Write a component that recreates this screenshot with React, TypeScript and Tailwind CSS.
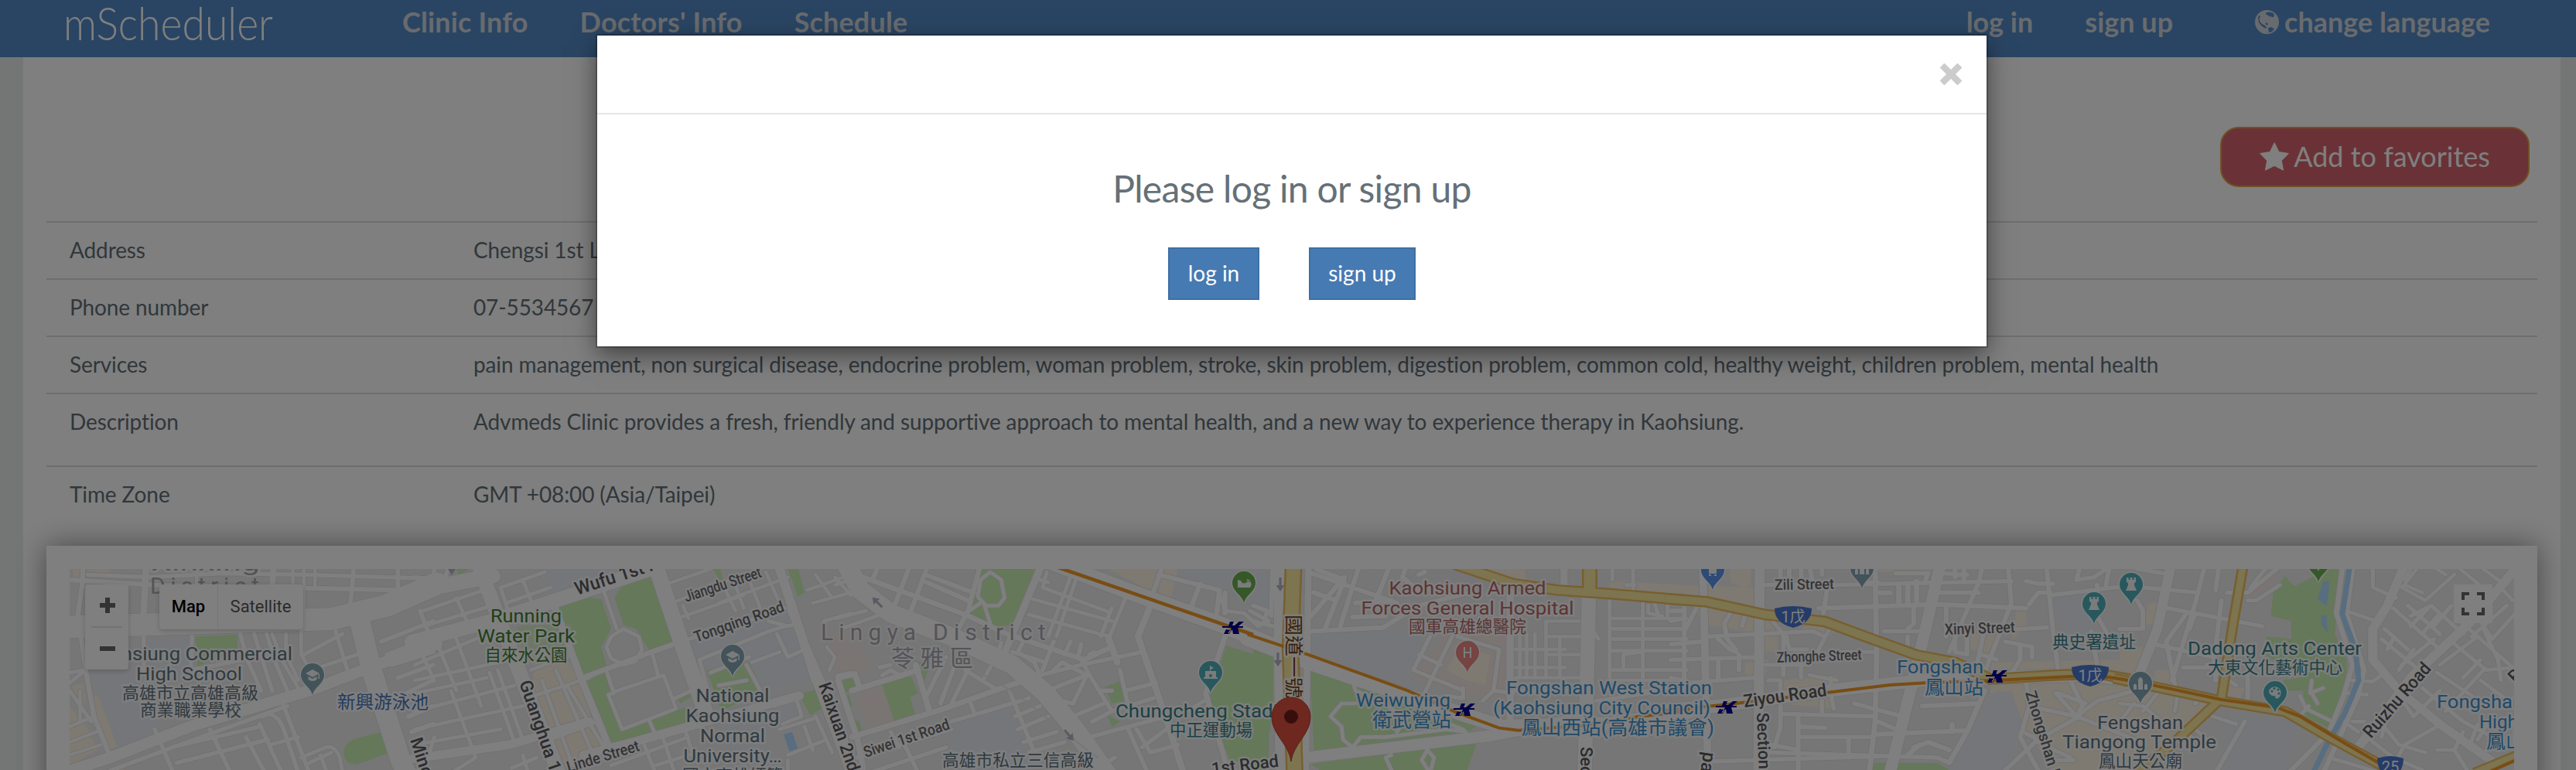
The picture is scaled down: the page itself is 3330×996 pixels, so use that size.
import React from "react";

type Road = [string, number];
type Area = [string, string];
interface Sector {
  t: string;
  areas: Area[];
  roads: Road[];
  trunks?: Road[];
  rail?: string[];
}

const GREEN = "#caf0b5";
const CAMPUS = "#e8edf5";
const TAN = "#fcf3e2";
const PINK = "#f4e8e5";
const WATER = "#b0dbff";

const sectors: Sector[] = [
  {
    t: "translate(0 680) scale(0.35714 0.33333)",
    areas: [
      ["M262,168H300L290,210 265,205Z", TAN],
      ["M318,168H398V186L318,182Z", TAN],
      ["M532,436L687,430 688,560 600,600 570,800 424,857 320,570 532,560Z", CAMPUS],
      ["M707,430L860,424V480L715,545Z", GREEN],
      ["M260,620L300,615 310,660 300,720Z", TAN],
      ["M330,655L358,662 424,855 385,876 325,720Z", TAN],
      ["M252,700L320,790 352,870 252,930Z", TAN],
      ["M1245,870Q1250,840 1290,825L1370,803Q1412,805 1418,850L1428,875 1290,926Q1240,925 1245,870Z", GREEN],
      ["M400,940L440,922 452,948H400Z", TAN],
    ],
    roads: [
      ["M240,393L1200,362 1400,310 1580,225", 86],
      ["M240,955L385,905 700,775 1120,640 1350,545 1580,460", 44],
      ["M1300,360L1345,560 1450,910 1470,960", 74],
      ["M252,210L560,230 1250,245 1440,250", 18],
      ["M300,168L298,230 282,340 310,560 340,740 400,900", 18],
      ["M318,190L540,200 800,185 1100,190 1568,205", 16],
      ["M528,168L520,340", 24], ["M712,168V240", 12], ["M990,168L985,240", 22],
      ["M1060,168V250M1100,168V330M1140,168V240", 12],
      ["M1280,168L1268,310M1440,168V250", 16],
      ["M1440,250L1568,200", 16],
      ["M310,560L252,610M310,560L252,570M252,640L330,760M252,780L340,740", 14],
      ["M252,840L350,800M252,890L365,850M290,640V760", 12],
      ["M520,430V560M695,430L690,560 880,520", 16],
      ["M870,420L895,520 945,640M920,420L985,640M965,420L1000,540 1040,640", 15],
      ["M985,420L1020,520 1080,630M1035,420V500L1080,600M1090,410V500L1150,610", 14],
      ["M1100,500L1240,420M1100,570L1320,490M1215,410L1260,570", 15],
      ["M1380,450L1568,370M1400,500L1568,430M1520,330L1568,460M1420,540L1568,490M1440,590L1568,540M1450,660L1568,600", 16],
      ["M1480,740L1568,700M1490,800L1568,770", 18],
      ["M560,790L640,990M600,800L950,690M620,860L940,780M640,920L970,830M760,790L830,950M890,820L960,960", 16],
      ["M400,950L600,870 1040,700M1020,680L1120,960M940,770L1020,960M950,740Q1000,710 1030,800L1080,960", 16],
      ["M1090,900L1180,860Q1210,850 1230,900L1240,960M980,850L1080,820M1120,920L1200,880M1160,890L1180,950", 14],
    ],
  },
  {
    t: "translate(540 680) scale(0.35714 0.33333)",
    areas: [
      ["M450,168H830L485,262Z", CAMPUS],
      ["M502,312L838,187 928,460 842,492 790,400 745,385 712,280 735,240 700,235 600,275 665,285 700,400 665,470 685,550 598,590Z", GREEN],
      ["M603,605L682,570 735,790 970,705 985,775 690,868Z", GREEN],
      ["M140,168H185L150,192Z", GREEN], ["M360,390L560,380 540,470 380,480Z", "#d8efca"],
      ["M420,540L560,530 700,860 520,948 420,640Z", TAN],
      ["M980,450L1330,330 1440,600 1230,640 1190,520 1020,560Z", CAMPUS],
      ["M1045,560L1200,530 1250,640 1100,720Z", GREEN],
      ["M1100,720L1330,650 1390,740 1240,820 1300,948H1130Z", CAMPUS],
      ["M1340,168H1378L1400,260 1375,275Z", GREEN],
      ["M1380,655L1460,630 1480,700 1420,735Z", GREEN],
      ["M1070,168H1095L1110,230 1085,200Z", GREEN],
      ["M1470,430L1568,400V580L1520,590Z", PINK],
      ["M1526,610L1568,595V640L1535,650Z", GREEN],
      ["M1325,810L1355,800 1376,865 1345,876Z", WATER],
      ["M936,660L985,640 990,665 950,690Z", GREEN],
    ],
    roads: [
      ["M-20,450L250,375 500,290 850,165", 56],
      ["M-20,255L270,195", 60],
      ["M225,168L290,350 430,740 510,960", 54],
      ["M-20,905L330,850 620,760", 34],
      ["M600,890L780,840 980,780 1380,660", 34],
      ["M860,150L950,440 1040,720", 58],
      ["M1310,168L1430,560 1568,960", 34],
      ["M1350,330L1480,650 1568,900", 26],
      ["M490,300L590,590 700,880", 26],
      ["M598,590L842,492 928,460", 20],
      ["M672,250L720,400M745,400L800,430 812,480 790,525 745,540 700,515 683,470 700,430Z", 14],
      ["M685,570L710,650 690,655 740,790 935,710 890,580 710,645M850,500L870,580M840,760L860,810", 14],
      ["M60,168L55,215M110,168L100,200M-10,200L60,210", 16],
      ["M20,330L240,250M20,390L270,310M140,280L190,400M30,440V420M300,240L460,180M320,300L480,240M300,240L330,340M380,210L410,290", 14],
      ["M-10,540L230,430M20,510L60,600M80,480L140,640M140,440L230,700M-10,600L340,520M-10,650L250,590M-10,720L350,620M-10,790L380,700M-10,850L300,790", 14],
      ["M120,640L210,900M260,570L350,840M290,560L380,830M60,820L20,960M210,900L120,960", 14],
      ["M410,560L560,500M420,660L620,590M450,600L560,930M500,560L640,900M540,620L680,870M480,830L650,760M340,940L430,900M380,890L400,960", 14],
      ["M700,930L980,820M820,850L860,960M890,830L930,960M970,800L1000,900M860,930L1010,880", 14],
      ["M890,230L1060,168M920,300L1130,210M940,360L1180,270M960,310L980,360M1110,240L1150,330M1150,230L1180,320M1200,210L1240,320M1260,180L1310,300M1090,300L1340,200", 13],
      ["M980,440L1140,390 1330,320M1020,520L1270,410 1330,390M1020,520L1050,640M1060,570L1200,510M1190,540L1240,640M1090,620L1190,600", 15],
      ["M1270,370L1340,390 1370,380M1300,420L1340,510 1400,480M1400,480L1430,600", 15],
      ["M930,670L990,640M1210,530L1310,490M1290,700L1370,670 1390,740 1320,770M1310,790L1430,750M1400,780L1430,870M1340,890L1480,830", 14],
      ["M1430,300L1568,260M1410,250L1568,190M1440,190L1500,280M1510,200L1568,270M1470,370L1568,340M1480,470L1510,510 1490,560M1520,580L1568,570", 13],
      ["M1440,740L1500,880M1340,910V960", 14],
    ],
  },
  {
    t: "translate(1080 680) scale(0.35714 0.33333)",
    areas: [
      ["M525,168H722L640,385 570,395 470,340 510,250Z", GREEN],
      ["M0,400L90,450 130,560 20,590 0,560Z", PINK],
      ["M70,660L168,615 215,765 125,800Z", PINK],
      ["M168,615L270,575 300,650 270,665 290,740 215,765Z", GREEN],
      ["M285,520L340,545 315,620Z", GREEN],
      ["M20,600L65,585 75,625 25,640Z", GREEN], ["M30,670L50,655 60,700 40,705Z", GREEN], ["M65,760L85,755 100,810 80,815Z", GREEN],
      ["M415,780L625,695 695,880 700,948H430Z", CAMPUS],
      ["M985,168H1170L1150,250 1110,235Z", TAN], ["M1175,168H1240L1215,275 1170,262Z", TAN],
      ["M1230,168H1568V330L1400,265 1310,220Z", CAMPUS],
      ["M975,625L1030,605 1050,680 1000,690Z", GREEN], ["M985,735L1030,760 1000,782Z", GREEN],
      ["M1415,465L1510,497 1525,470 1568,490V910L1430,915 1345,690Z", GREEN],
    ],
    roads: [
      ["M40,150L90,250 200,340 420,430 640,540 760,650 860,780 980,960", 72],
      ["M780,140L1100,270 1400,385 1580,465", 62],
      ["M740,168L610,500", 26],
      ["M100,200L470,345 620,420 900,520 1000,470", 20],
      ["M325,190L500,260M330,220L480,290M150,168L135,210M265,168L210,320M330,168L270,340M520,168L480,330 430,430", 18],
      ["M560,180L600,210 612,280 590,310H545L515,275 525,210Z", 14],
      ["M470,340L525,300M540,310L560,380M0,230L80,200M0,360L110,330M20,400L150,350", 14],
      ["M765,180L750,240 990,335M740,210L770,220M715,285L1000,370M700,345L990,430M850,200L770,430M870,210L800,430M1050,280L985,450M1000,320L960,430", 14],
      ["M990,440L1020,530M1140,310L1095,430 1200,760 1260,960", 24],
      ["M1180,170L1150,260M1320,225L1290,310M1170,190L1390,250 1380,340M1410,260V340", 18],
      ["M1420,400L1340,650 1380,800 1420,948", 20],
      ["M10,590L70,575 85,620M10,600L80,830 100,940M60,640L300,560M290,540L340,720M60,820L380,715 630,620 740,580", 22],
      ["M400,510L330,660M440,520L380,690M480,560L420,690M560,550L540,590M470,560L590,640M630,640L720,880M490,690L500,720M420,760L700,670", 16],
      ["M160,550L200,540M170,580L200,560 230,580M80,900L420,790M250,850L300,960M200,800L230,860M120,960L400,860", 16],
      ["M650,740L740,700M660,790L770,740M680,840L800,800M700,880L830,840", 16],
      ["M560,470L600,500M600,455L590,490M640,490L760,530M690,430L660,490 720,530 740,580M790,450L750,560", 16],
      ["M850,450L830,500M890,460L880,500M935,490L920,500M740,580L890,540 1110,490M890,520L920,580 1000,720M790,560L820,530 910,580 790,630M910,580L860,690 820,680", 16],
      ["M860,740L970,690M930,760L1000,720 1150,670M1030,560L1060,700M960,640L1000,640M1050,640L1160,610M920,820L1200,740M1060,790L1130,960M1090,790L1140,880 1240,850M1110,860L1210,780M980,920L1010,900", 16],
      ["M1240,740L1350,670M1500,330L1568,370M1395,275L1410,330 1480,340 1530,390 1568,370", 14],
    ],
  },
  {
    t: "translate(1620 680) scale(0.35714 0.33333)",
    areas: [
      ["M205,415L480,400 620,420 570,560 600,640 205,480Z", CAMPUS],
      ["M565,590L700,420 940,400V710L800,660Z", PINK],
      ["M700,560L740,480 860,500 840,620 770,600Z", TAN],
      ["M0,475L72,500V700L40,948H0Z", GREEN],
      ["M205,535L520,640 830,760 780,800 220,880Z", GREEN],
      ["M210,925L810,840 775,948H240Z", GREEN],
      ["M640,168H985V235L830,190 640,190Z", TAN], ["M1290,215L1568,230V310L1290,290Z", TAN],
      ["M600,168H800L900,260 480,230Z", "#ebebf0"],
    ],
    roads: [
      ["M95,160V500L100,960", 40], ["M200,160L190,960", 24],
      ["M-20,440L200,530 640,690 900,780 1300,770 1580,720", 56],
      ["M190,900L860,815 1200,745", 44],
      ["M930,250V750", 26], ["M1215,280L1200,960", 52], ["M1125,168V250", 26],
      ["M230,170L330,210 260,400M200,180L520,300M380,168L315,390M200,410L470,395 600,310 780,260M210,350L330,200M440,300L490,168M370,300L500,290M360,355L480,350M550,168L540,200 610,260M620,180L600,190M220,260L300,290", 18],
      ["M640,430L580,560 760,640M720,430L620,650M600,500L680,540M740,430L890,480 870,640 830,680M870,640L940,650M760,630V670L700,660", 15],
      ["M360,600L370,640 460,680 540,740M370,690L320,690 280,740 320,780 325,830 360,860 390,820 480,820 700,790 770,800M560,740L520,800M640,740L760,790M500,890L480,900 500,948M630,870L610,910 640,960 655,900Z", 14],
      ["M950,480H1130M950,550H1130M965,420V590M990,420V590M1020,420V590M1060,380V590M1060,430H1180M1060,500H1180M1110,430V590M950,590H1180M1060,400V370H1180", 13],
      ["M1290,280V640M1290,360H1568M1300,400H1568M1300,440H1568M1300,485H1568M1410,290V590M1300,560H1568M1340,560V500L1400,490M1300,600H1568M1450,290L1470,360M1500,310V360M1430,310V340L1480,350", 14],
      ["M1220,390L1250,440M1375,168V250M1300,168V210M1350,230H1380M1300,640H1430L1568,610M950,640H1180M1240,680L1568,630", 14],
      ["M0,310L50,330 40,380 70,390M0,370L30,380M70,168L65,350", 16],
    ],
    trunks: [
      ["M146,150L135,480 150,960", 50],
      ["M730,150L940,225 1100,250 1300,265 1580,290", 30],
      ["M1218,150V255", 42],
    ],
    rail: ["M-20,422L180,493 560,640 730,722 890,785 960,794 1200,775 1400,740 1580,718"],
  },
  {
    t: "translate(2160 680) scale(0.38265 0.33333)",
    areas: [
      ["M200,168H270V230L240,240 200,220Z", TAN], ["M0,230L300,240 280,310 60,300 0,270Z", TAN],
      ["M80,300L350,340V420L260,410 100,380Z", TAN], ["M480,370L560,400 540,430 440,400Z", TAN],
      ["M310,430H360V490H310Z", TAN], ["M250,530L330,520 320,580 250,590Z", TAN], ["M370,600L560,580 550,710 370,690Z", TAN],
      ["M700,168H890L880,180 700,180Z", TAN], ["M1010,420L1110,430 1080,500 1010,480Z", TAN], ["M1170,310H1200V390L1150,450Z", TAN],
      ["M1080,530L1568,520V948H1300L1200,800 1150,640 1080,650Z", TAN],
      ["M1280,270L1400,240 1440,440 1330,410Z", CAMPUS],
      ["M1100,640L1155,660 1190,800 1130,948H940Z", CAMPUS],
      ["M680,920H900L940,948H680Z", GREEN],
    ],
    roads: [
      ["M300,150L295,960", 34], ["M108,168L125,960", 26],
      ["M910,150L850,450 740,960", 40],
      ["M-20,715L160,700 530,640 850,600 1100,590 1400,580 1568,600", 50],
      ["M370,168V230L420,240M400,168V230M440,168V220M470,168L480,230M320,230H560L1150,215M510,168V190M530,230L515,340M640,220H700", 16],
      ["M690,168L695,500 690,760 670,960M770,230V300M800,230V300M830,215V310M700,260H740M500,320L900,305 1200,320", 18],
      ["M760,185H870L860,210M920,185L1000,190M960,168V200M990,168V220M900,260H1040M1050,168L1040,220 940,490M1140,168L1150,300 1050,600", 16],
      ["M0,330H40M0,370L40,360M45,300V640M90,310L50,400M120,430L480,410 520,430M0,520L300,510M0,590L40,600M60,610L280,590M200,340L180,380 190,440 220,480M250,350L240,390M160,440L200,480 220,490M160,520V600M230,500V560M0,460L100,450", 16],
      ["M320,340L380,420V580M390,430L400,480H460M320,540H470M540,390L490,500 460,540M440,540V590M560,490H690M540,590V650L550,710M470,580L560,600M330,600H370V640", 15],
      ["M720,410H850M800,430V480M820,310V380L800,400M930,320V430M960,400V490M1000,400V500L960,490M1060,400L1030,560M1060,410L1270,395M1050,500L1100,520M1130,450L1220,470V510M1180,460V520L1140,590", 16],
      ["M1270,168L1290,400 1310,580M1380,168L1370,210 1430,200 1470,168M1200,215L1240,225H1290M1280,270L1568,230M1210,305L1240,260H1280M1440,230V350L1480,430M1480,168L1470,230M1420,410L1440,540", 16],
      ["M370,730L680,740M370,700V780L350,860M340,850L430,870M430,730V948M440,780L520,785M430,820L680,820M600,830V900M510,680V730M130,915L700,895M320,880L900,900 940,920M700,760L780,800M620,690L780,740", 16],
      ["M690,810L1000,795M820,860L870,840 940,870M800,890L840,850M1060,640L1000,800 940,920M850,700L1040,690M950,770V800", 18],
      ["M1200,600L1210,700 1180,820 1240,948M1210,700L1370,740 1568,830M1300,650L1370,740 1440,680 1568,640M1310,650L1400,690M1380,740L1240,830 1190,800M1240,840L1350,900M1370,740L1390,700 1350,600M1130,948L1240,830M1300,910L1360,910", 16],
    ],
    trunks: [
      ["M-20,283L120,295 320,345 520,372 680,440 830,502 960,530 1080,595 1300,580 1450,575 1568,600", 30],
    ],
    rail: ["M-20,718L200,692 400,665 740,618 860,610 1100,600 1350,585 1480,588 1580,606"],
  },
  {
    t: "translate(2740 680) scale(0.37628 0.33333)",
    areas: [
      ["M568,195L600,235 720,168H760L740,420 780,520V620L720,785 640,740 630,640 580,640 560,600 620,590 500,500 505,430 590,440 590,370 520,350 527,260Z", GREEN],
      ["M490,210L550,168H560L530,220 460,280 440,270Z", PINK],
      ["M385,740L610,760 570,948H350Z", CAMPUS],
      ["M0,480L80,470 70,560 0,550Z", TAN], ["M100,300L130,300 120,380 80,390Z", TAN],
      ["M120,560L200,560 190,640 120,610Z", TAN], ["M350,610L430,630 410,680 350,670Z", TAN],
      ["M0,600L330,690 180,840 0,948Z", TAN],
      ["M700,215H722L712,312 680,285Z", WATER], ["M693,345L710,350 716,420 692,380Z", WATER],
    ],
    roads: [
      ["M175,160L130,400 60,600", 34],
      ["M980,150L920,310 870,400V520L960,640 1100,770 1300,930", 32],
      ["M1360,168L1200,380 1000,590 820,860", 34],
      ["M765,168L745,340 800,540 770,660 720,800 580,960", 18], ["M800,168L780,340 840,560 820,660 740,860 700,960", 18],
      ["M80,240L270,260M60,168L180,190M290,168L260,300 180,600M340,168L330,250M350,290L320,560M165,320L490,390M230,340L160,450 190,620M120,460L320,510M60,290L80,330V400H0M260,340L240,400M300,540L400,620M220,550H330V600M440,560V680M430,760L330,960M260,690L280,660M370,260H440L540,168", 16],
      ["M440,290L470,290 550,230M450,240L500,168M870,168V240L950,280M790,335L880,370M800,600L870,605 900,580M780,650L850,655M770,760L820,800M320,740L400,770M620,660L640,710 730,760M660,600L655,650 700,630M660,650L680,690M650,700L610,750", 14],
      ["M1020,168L970,240 1050,290 1150,190M1090,168L1120,190M1170,168L1280,270M980,230L1040,260M1250,168L1300,210M1310,240L1350,290M1000,168L980,210", 13],
      ["M940,320L1110,490M990,310L1100,420M1060,320L1000,390M1100,340L1040,420M1140,310L1080,390M1000,350L1070,310 1180,420M910,400L990,480M900,440L1050,580M940,440L920,480M970,540L1080,440M1010,480L960,560", 15],
      ["M1170,370L1360,560M1210,430L1330,310M1130,440L1260,560 1360,550M1100,540L1230,430M1250,400L1300,520 1310,600M1240,370L1280,440 1360,340M1180,590L1240,520M1090,570L1210,660M1040,630L1180,760 1280,820M1100,640L1010,740M1250,560L1120,720M1240,600L1360,700", 14],
      ["M880,740L960,850 1050,880M930,700L900,820M960,660L1010,740M1090,780L980,850 930,948M1180,800L1150,870H1090M1230,770L1200,860M1280,740L1230,830M1360,760L1260,870M1150,870L1200,960M860,830L940,900 1040,948", 14],
      ["M130,650L80,720M200,650L190,720M220,800L260,830M250,780L320,850M0,690L80,700 180,790M50,690L0,760", 14],
      ["M720,900L900,960M800,760L840,760", 14],
    ],
    trunks: [
      ["M425,150L390,380 350,670", 24],
      ["M335,685L180,850 60,960", 26],
      ["M-20,592L120,625 350,680 570,722 720,820 900,930 960,960", 28],
      ["M1370,890L1220,960", 28],
    ],
    rail: ["M-20,590L120,620 350,675 540,705 620,740 760,835 890,920 960,955", "M1370,905L1260,960"],
  },
];

const TrunkLayer = ({ s }: { s: Sector }) => (
  <g transform={s.t} fill="none">
    {s.trunks?.map(([d, w], i) => <path key={i} d={d} stroke="#ecbf62" strokeWidth={w + 14} />)}
    {s.trunks?.map(([d, w], i) => <path key={"f" + i} d={d} stroke="#fbe9a0" strokeWidth={w} />)}
  </g>
);

interface LabelProps {
  x: number; y: number; w?: number; s?: number; c: string; r?: number;
  b?: boolean; mid?: boolean; children: string;
}
const Label = ({ x, y, w, s = 24, c, r, b, mid, children }: LabelProps) => (
  <text
    x={x} y={y} fontSize={s} fill={c} fontWeight={b ? 500 : 400}
    textAnchor={mid ? "middle" : "start"}
    textLength={w} lengthAdjust="spacingAndGlyphs"
    transform={r ? `rotate(${r} ${x} ${y})` : undefined}
    stroke="#ffffff" strokeOpacity={0.85} strokeWidth={5} strokeLinejoin="round" paintOrder="stroke"
  >
    {children}
  </text>
);

const Pin = ({ x, y, c, children }: { x: number; y: number; c: string; children?: React.ReactNode }) => (
  <g transform={`translate(${x} ${y})`}>
    <path d="M0,26 C-2,16 -15,11 -15,0 A15,15 0 1 1 15,0 C15,11 2,16 0,26Z" fill={c} stroke="#fff" strokeWidth={3} paintOrder="stroke" />
    <g fill="#f4f8f8">{children}</g>
  </g>
);
const Cap = () => <><path d="M0,-7L-9,-2 0,3 9,-2Z" /><path d="M-5.500,2V6Q0,10 5.500,6V2L0,5Z" /><path d="M7.500,-1H9V5H7.500Z" /></>;
const Rook = () => <path d="M-6,-9H-3.500V-6H-1.500V-9H1.500V-6H3.500V-9H6V-2.500H4V1L7,8H-7L-4,1V-2.500H-6Z" />;
const Temple = () => <path d="M-9,8V2Q-7.500,-1 -5,2V8ZM-3,8V-5Q0,-11 3,-5V8ZM5,8V2Q7.500,-1 9,2V8Z" />;
const Station = ({ x, y }: { x: number; y: number }) => (
  <g transform={`translate(${x} ${y})`} fill="#000096">
    <path d="M-4,-8H1L-1,-3H2L8,-8H14L7,-2H13V0H6L8,8H0L-1,2 -5,8H-12L-9,2H-3L-2,0H-14V-2H-6Z" />
    <path d="M-8,2H-3M-3,3L-6,7" stroke="#f2cf9b" strokeWidth={1.500} />
  </g>
);
const Shield = ({ x, y, t, w = 24 }: { x: number; y: number; t: string; w?: number }) => (
  <g transform={`translate(${x} ${y})`}>
    <path d={`M${-w},-11Q0,-17 ${w},-11Q${w},8 0,14Q${-w},8 ${-w},-11Z`} fill="#4a78d0" />
    <text y={7} fontSize={20} fill="#fff" textAnchor="middle">{t}</text>
  </g>
);
const Arrow = ({ x, y, r }: { x: number; y: number; r: number }) => (
  <path transform={`translate(${x} ${y}) rotate(${r})`} d="M-1.500,-9H1.500V1H5.500L0,9 -5.500,1H-1.500Z" fill="#b4b4c8" />
);

const TEAL = "#38808c";
const SLATE = "#607480";
const STREET = "#68686c";
const DARK = "#58585c";
const TRANSIT = "#3c94d4";
const ROSE = "#b86868";

const MapCanvas = () => (
  <svg viewBox="90 736 3160 260" className="block h-[260px] w-[3160px] font-[Roboto,'Noto_Sans_CJK_TC',sans-serif]">
    <rect x={90} y={736} width={3160} height={260} fill="#ededed" />
    {sectors.map((s) => (
      <g key={s.t} transform={s.t}>{s.areas.map(([d, f], i) => <path key={i} d={d} fill={f} />)}</g>
    ))}
    {sectors.map((s) => (
      <g key={s.t} transform={s.t} fill="none" stroke="#e0e0e0" strokeLinejoin="round" strokeLinecap="round">
        {s.roads.map(([d, w], i) => <path key={i} d={d} strokeWidth={w + 5} />)}
      </g>
    ))}
    {sectors.map((s) => (
      <g key={s.t} transform={s.t} fill="none" stroke="#ffffff" strokeLinejoin="round" strokeLinecap="round">
        {s.roads.map(([d, w], i) => <path key={i} d={d} strokeWidth={w} />)}
      </g>
    ))}
    <path d="M3037,736L3028,795 3045,840 3049,880 3030,925 3012,955 2990,1000" fill="none" stroke={WATER} strokeWidth={7} />
    {sectors.map((s) => <TrunkLayer key={s.t} s={s} />)}
    {sectors.map((s) => (
      <g key={s.t} transform={s.t} fill="none" stroke="#f09a28" strokeWidth={12}>
        {s.rail?.map((d) => <path key={d} d={d} />)}
      </g>
    ))}
    <path d="M1368,734L1620,821" fill="none" stroke="#f09a28" strokeWidth={4.500} />
    <path d="M1108,830Q1250,845 1330,910T1420,980" fill="none" stroke="#ececec" strokeWidth={2} />

    <Arrow x={1134} y={779} r={135} /><Arrow x={1382} y={951} r={-40} />
    <Arrow x={1655} y={756} r={0} /><Arrow x={1652} y={853} r={0} />
    <path d="M579,736h10l-5,8z" fill="#b4b4c8" />

    <Label x={195} y={738} w={141} s={30} c="#a8a8b0">Xinxing</Label>
    <text x={194} y={768} fontSize={30} fill="#a8a8b0" letterSpacing={6.500}>District</text>
    <Label x={112} y={854} w={266} c={SLATE}>Kaohsiung Commercial</Label>
    <Label x={176} y={880} w={137} c={SLATE}>High School</Label>
    <Label x={158} y={904} w={176} s={22} c={SLATE}>高雄市立高雄高級</Label>
    <Label x={181} y={926} w={131} s={22} c={SLATE}>商業職業學校</Label>
    <Label x={436} y={916} w={118} s={23} c="#4676bc">新興游泳池</Label>
    <Label x={530} y={957} s={23} c={DARK} r={72} b>Ming</Label>
    <Pin x={404} y={873} c="#84a6b4"><Cap /></Pin>

    <Label x={746} y={770} s={24} w={126} c={DARK} r={-18} b>Wufu 1st Rd</Label>
    <Label x={887} y={779} s={20} w={104} c={STREET} r={-18.500} b>Jiangdu Street</Label>
    <Label x={900} y={831} s={20} w={122} c={STREET} r={-19.500} b>Tongqing Road</Label>
    <Label x={680} y={805} w={92} c="#408030" mid>Running</Label>
    <Label x={680} y={831} w={126} c="#408030" mid>Water Park</Label>
    <Label x={680} y={855} w={107} s={22} c="#408030" mid>自來水公園</Label>
    <Label x={671} y={883} s={23} c={DARK} r={71} b>Guanghua 1st</Label>
    <Label x={735} y={999} s={20} w={97} c={STREET} r={-17} b>Linde Street</Label>
    <Pin x={947} y={849} c="#84a6b4"><Cap /></Pin>
    <Label x={947} y={908} w={95} c={SLATE} mid>National</Label>
    <Label x={947} y={934} w={121} c={SLATE} mid>Kaohsiung</Label>
    <Label x={947} y={960} w={84} c={SLATE} mid>Normal</Label>
    <Label x={947} y={986} w={127} c={SLATE} mid>University…</Label>
    <Label x={947} y={1011} w={130} s={22} c={SLATE} mid>國立高雄師範</Label>
    <text x={1061} y={828} fontSize={30} fill="#a8a8b0" letterSpacing={7.200} stroke="#fff" strokeWidth={4} strokeOpacity={0.7} paintOrder="stroke">Lingya District</text>
    <text x={1152} y={862} fontSize={30} fill="#a8a8b0" letterSpacing={8} stroke="#fff" strokeWidth={4} strokeOpacity={0.7} paintOrder="stroke">苓雅區</text>
    <Label x={1058} y={886} s={23} w={120} c={DARK} r={71} b>Kaixuan 2nd</Label>

    <Label x={1119} y={980} s={20} w={116} c={STREET} r={-18.800} b>Siwei 1st Road</Label>
    <Label x={1218} y={991} s={22} w={196} c={SLATE}>高雄市私立三信高級</Label>
    <Label x={1442} y={928} w={247} c={TEAL}>Chungcheng Stadium</Label>
    <Label x={1512} y={952} w={107} s={22} c={TEAL}>中正運動場</Label>
    <Label x={1567} y={1002} s={22} c={DARK} r={-7} b>1st Road</Label>
    <Pin x={1608} y={754} c="#6cb050"><path d="M-8,-4V6H8Q11,2 8,-3L4,-6V-1Q-2,3 -4,-3Z" /><path d="M2,-5h7M1,-2h8" stroke="#6cb050" /></Pin>
    <Pin x={1565} y={870} c="#50b0bc"><path d="M-1,-9L4,-6 0,-4V-2H7V6H9V8H-9V6H-7V-2H-1Z" /><circle r={2} cy={4} fill="#50b0bc" /></Pin>
    <Station x={1594} y={812} />

    <Label x={1664} y={795} w={108} s={24} c="#70421a" r={90}>國道一號</Label>
    <Label x={1897} y={768.500} w={203} c={ROSE} mid>Kaohsiung Armed</Label>
    <Label x={1897} y={795} w={275} c={ROSE} mid>Forces General Hospital</Label>
    <Label x={1897} y={818} w={152} s={22} c={ROSE} mid>國軍高雄總醫院</Label>
    <Pin x={1897} y={844} c="#ec8884"><path d="M-5,-7H-3V-1H3V-7H5V7H3V1H-3V7H-5Z" /></Pin>
    <Label x={1753} y={914} w={122} c={TRANSIT}>Weiwuying</Label>
    <Label x={1774} y={940} w={102} s={25} c={TRANSIT}>衛武營站</Label>
    <Station x={1893} y={918} />
    <Label x={1947} y={898} w={266} c={TRANSIT}>Fongshan West Station</Label>
    <Label x={1930} y={924} w={281} c={TRANSIT}>(Kaohsiung City Council)</Label>
    <Label x={1967} y={950} w={249} s={25} c={TRANSIT}>鳳山西站(高雄市議會)</Label>
    <Label x={2043} y={966} s={22} c={DARK} r={90} b>Section</Label>
    <g>
      <path d="M1669,985C1666,962 1644,950 1644,927A25,25 0 1 1 1694,927C1694,950 1672,962 1669,985Z" fill="#dc5040" stroke="#b83c30" strokeWidth={1} />
      <circle cx={1669} cy={927} r={9} fill="#701c18" />
    </g>

    <Label x={2294} y={763} s={19} w={77} c={STREET} r={-1} b>Zili Street</Label>
    <Label x={2297} y={857} s={19} w={110} c={STREET} r={-2} b>Zhonghe Street</Label>
    <Label x={2514} y={821} s={20} w={91} c={STREET} r={-2} b>Xinyi Street</Label>
    <Label x={2452} y={871} w={112} c={TRANSIT}>Fongshan</Label>
    <Label x={2488} y={898} w={76} s={25} c={TRANSIT}>鳳山站</Label>
    <Label x={2255} y={915} s={23} w={108} c={DARK} r={-8} b>Ziyou Road</Label>
    <Label x={2271} y={922} s={22} w={73} c={DARK} r={88} b>Section</Label>
    <Label x={2202} y={972} s={24} c={DARK} r={98} b>pa</Label>
    <Label x={2618} y={896} s={20} c={STREET} r={73} b>Zhongshan Road</Label>
    <Station x={2232} y={915} /><Station x={2581} y={875} />
    <Shield x={2318} y={798} t="1戊" /><Shield x={2702} y={874} t="1戊" />
    <Pin x={2214} y={737} c="#5c94ec"><path d="M-5,-8H5V5H-5ZM-5,6h3v2h-3zM2,6h3v2h-3z" /></Pin>
    <Pin x={2407} y={735} c="#84a6b4"><Temple /></Pin>
    <Pin x={2707} y={781} c="#50b0bc"><Rook /></Pin>
    <Pin x={2755} y={756} c="#50b0bc"><Rook /></Pin>
    <Label x={2653} y={838} w={108} s={22} c={TEAL}>典史署遺址</Label>
    <Pin x={2767} y={884} c="#84a6b4"><Temple /></Pin>
    <Label x={2711} y={943} w={111} c={SLATE}>Fengshan</Label>
    <Label x={2666} y={968} w={199} c={SLATE}>Tiangong Temple</Label>
    <Label x={2713} y={992} w={108} s={22} c={SLATE}>鳳山天公廟</Label>

    <Label x={2828} y={847} w={225} c={TEAL}>Dadong Arts Center</Label>
    <Label x={2854} y={871} w={174} s={22} c={TEAL}>大東文化藝術中心</Label>
    <Pin x={2941} y={896} c="#50b0bc"><path d="M-8,-2A8,8 0 1 1 4,7Q0,9 0,4Q-7,5 -8,-2Z" /><g fill="#50b0bc"><circle cx={-4} cy={-2} r={1.600} /><circle cx={-1} cy={-5.500} r={1.600} /><circle cx={4} cy={-4} r={1.600} /><circle cx={5} cy={1} r={1.600} /></g></Pin>
    <Pin x={2997} y={727} c="#6cb050"><path d="M-1,0H1V11H-1Z" /></Pin>
    <Label x={3065} y={956} s={23} w={120} c={DARK} r={-49} b>Ruizhu Road</Label>
    <Label x={3150} y={916} w={112} c={TRANSIT}>Fongshan</Label>
    <Label x={3205} y={942} c={TRANSIT}>High School</Label>
    <Label x={3214} y={968} s={25} c={TRANSIT}>鳳山高中</Label>
    <Label x={3251} y={884} s={22} c={DARK} r={-45} b>R</Label>
    <Shield x={3090} y={992} t="25" w={17} />
  </svg>
);

const rows = [
  ["Address", "Chengsi 1st Ln"],
  ["Phone number", "07-5534567"],
  ["Services", "pain management, non surgical disease, endocrine problem, woman problem, stroke, skin problem, digestion problem, common cold, healthy weight, children problem, mental health"],
  ["Description", "Advmeds Clinic provides a fresh, friendly and supportive approach to mental health, and a new way to experience therapy in Kaohsiung."],
  ["Time Zone", "GMT +08:00 (Asia/Taipei)"],
];

const GlobeIcon = () => (
  <svg viewBox="0 0 31 31" className="size-[31px]">
    <circle cx={15.500} cy={15.500} r={15.500} fill="currentColor" />
    <g fill="#548ac6">
      <path d="M14,3.500L18,2.500 24,4 25,8 22,9.500 20,7.500 18.500,9 17,6.500 14.500,6Z" />
      <path d="M4,9.500L6,6.500 7,8 5.500,11 6.500,15 9,18 13,20 15,22.500 14,24 9,21 5,16Z" />
      <path d="M13,17L16,16.500 17,19 15,19.500Z" />
      <path d="M17,23L21,22 25,24.500 22,28 18,29Z" />
    </g>
  </svg>
);

const StarIcon = () => (
  <svg viewBox="61 546 113 110" preserveAspectRatio="none" className="h-[37px] w-[38px]">
    <path d="M118,548L135,583 172,589 145,616 152,653 118,636 83,653 90,616 63,589 101,583Z" fill="currentColor" stroke="currentColor" strokeWidth={3} strokeLinejoin="round" />
  </svg>
);

const CloseIcon = () => (
  <svg viewBox="0 0 28 28" className="size-[28px]">
    <path d="M5.500,1L14,9.500 22.500,1 27,5.500 18.500,14 27,22.500 22.500,27 14,18.500 5.500,27 1,22.500 9.500,14 1,5.500Z" fill="#ccc" stroke="#ccc" strokeWidth={2} strokeLinejoin="round" />
  </svg>
);

const Navbar = () => (
  <nav className="flex h-[74px] items-start bg-[#548ac6] text-[36px] leading-[44px] font-bold text-[#d0d6dc]">
    <div className="h-[74px] w-[438px] shrink-0 pl-[80px] text-[60px] leading-[64px] font-light text-white">
      <svg viewBox="0 0 280 70" className="block h-[70px] w-[280px]" fill="currentColor">
        <text x={2} y={52} fontSize={59} textLength={271} lengthAdjust="spacingAndGlyphs">mScheduler</text>
      </svg>
    </div>
    <div className="flex gap-[67px] pl-[82px] pt-[6px] tracking-[0.15px]">
      <span>Clinic Info</span>
      <span>Doctors' Info</span>
      <span>Schedule</span>
    </div>
    <div className="ml-auto flex pt-[6px] pr-[111px]">
      <span className="mr-[67px]">log in</span>
      <span className="mr-[106px]">sign up</span>
      <span className="flex items-center gap-[7px]"><GlobeIcon />change language</span>
    </div>
  </nav>
);

const MapCard = () => (
  <div className="mt-[30px] h-[330px] bg-white px-[30px] pt-[30px] shadow-[0_0_36px_rgba(0,0,0,0.45)]">
    <div className="relative">
      <MapCanvas />
      <div className="absolute top-[20px] left-[20px] flex h-[110px] w-[56px] flex-col items-center rounded-[4px] bg-white shadow-[0_2px_6px_rgba(0,0,0,0.2)]">
        <svg viewBox="0 0 56 110" className="h-[110px] w-[56px]" fill="#666">
          <path d="M26,17h6v7h7v6h-7v7h-6v-7h-7v-6h7zM19,80h20v6H19z" />
          <path d="M8,54h40v2H8z" fill="#e6e6e6" />
        </svg>
      </div>
      <div className="absolute top-[20px] left-[116px] flex h-[58px] rounded-[4px] bg-white font-[Roboto,sans-serif] text-[22px] leading-[58px] shadow-[0_2px_6px_rgba(0,0,0,0.2)]">
        <span className="w-[76px] border-r border-[#ececec] text-center font-medium text-black">Map</span>
        <span className="w-[110px] text-center text-[#565656]">Satellite</span>
      </div>
      <div className="absolute top-[20px] right-[28px] h-[50px] w-[50px] bg-white">
        <svg viewBox="0 0 50 50" className="size-[50px]" fill="none" stroke="#666" strokeWidth={4}>
          <path d="M12,20V12H20M30,12H38V20M38,30V38H30M20,38H12V30" />
        </svg>
      </div>
    </div>
  </div>
);

const Modal = () => (
  <div className="h-[402px] w-[1796px] bg-white shadow-[0_10px_30px_rgba(0,0,0,0.5),0_0_0_2px_rgba(0,0,0,0.2)]">
    <div className="flex h-[102px] items-center justify-end border-b-2 border-[#e5e5e5] pr-[32px]">
      <CloseIcon />
    </div>
    <div className="flex flex-col items-center pt-[66px]">
      <h2 className="text-[48px] leading-[60px] tracking-[-0.68px] text-[#657078]">Please log in or sign up</h2>
      <div className="mt-[46px] flex gap-[64px] text-[28px] text-white">
        <button className="h-[68px] w-[118px] border-2 border-[#3e6fa5] bg-[#467ab3] pb-[2px]">log in</button>
        <button className="h-[68px] w-[138px] border-2 border-[#3e6fa5] bg-[#467ab3] pb-[2px]">sign up</button>
      </div>
    </div>
  </div>
);

export default function App() {
  return (
    <div className="relative h-[996px] w-[3330px] overflow-hidden bg-[#e8edeb] font-[Lato,sans-serif]">
      <Navbar />
      <main className="mr-[20px] ml-[30px] h-[922px] bg-white px-[30px] pt-[90px]">
        <div className="flex justify-end pr-[10px]">
          <button className="flex h-[78px] w-[400px] items-center justify-center gap-[6px] rounded-[24px] border-2 border-[#e0a04a] bg-[#d4646e] pb-[2px] text-[36px] text-white">
            <StarIcon />Add to favorites
          </button>
        </div>
        <div className="mt-[44px] text-[28px] leading-[40px] tracking-[-0.12px] text-[#626e76]">
          {rows.map(([k, v]) => (
            <div key={k} className={`flex border-t-2 border-[#dddddd] px-[30px] pt-[15px] whitespace-nowrap ${k === "Description" ? "h-[94px]" : "h-[74px]"}`}>
              <span className="w-[522px] shrink-0">{k}</span>
              <span>{v}</span>
            </div>
          ))}
        </div>
        <MapCard />
      </main>
      <div className="absolute inset-0 flex items-start bg-black/50 pt-[46px] pl-[772px]">
        <Modal />
      </div>
    </div>
  );
}
